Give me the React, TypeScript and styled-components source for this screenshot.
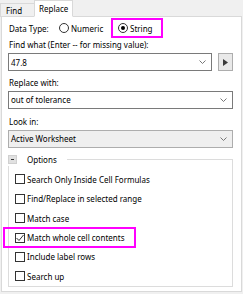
import styled, { createGlobalStyle } from 'styled-components';

const GlobalStyle = createGlobalStyle`
  html, body {
    margin: 0;
    padding: 0;
    background: #f0f0f0;
  }
  body {
    width: 243px;
    height: 294px;
    overflow: hidden;
    font-family: "Noto Sans", "Open Sans", sans-serif;
    font-size: 8px;
    color: #000;
  }
`;

const Window = styled.div`
  width: 243px;
  height: 294px;
  box-sizing: border-box;
  padding: 0 1px 2px 1px;
  display: flex;
  flex-direction: column;
`;

const TabBar = styled.div`
  display: flex;
  align-items: flex-end;
  height: 17px;
  margin-left: -1px;
  margin-bottom: -1px;
  position: relative;
  z-index: 1;
`;

const Tab = styled.div<{ $active?: boolean }>`
  box-sizing: border-box;
  height: ${(p) => (p.$active ? '17px' : '14px')};
  padding: ${(p) => (p.$active ? '0 4px 1px' : '1px 5px 0')};
  width: ${(p) => (p.$active ? '39px' : '35px')};
  display: flex;
  align-items: center;
  background: ${(p) => (p.$active ? '#fff' : '#f0f0f0')};
  border: 1px solid #d9d9d9;
  border-bottom: 1px solid ${(p) => (p.$active ? '#fff' : '#d9d9d9')};
  margin-right: ${(p) => (p.$active ? '0' : '-1px')};
`;

const Panel = styled.div`
  flex: 1;
  background: #fff;
  border: 1px solid #d9d9d9;
  padding: 1px 8px 0 6px;
  display: flex;
  flex-direction: column;
`;

const TypeRow = styled.div`
  display: grid;
  grid-template-columns: 51px 52px 52px;
  align-items: center;
  height: 20px;
`;

const TypeLabel = styled.span`
  padding-left: 1px;
`;

const Highlight = styled.div`
  box-sizing: border-box;
  border: 2px solid #ff00ff;
`;

const RadioOption = styled.label`
  display: flex;
  align-items: center;
  gap: 2px;
  white-space: nowrap;
`;

const StringBox = styled(Highlight)`
  display: flex;
  align-items: center;
  height: 20px;
  padding-left: 5px;
`;

const Radio = styled.span<{ $checked?: boolean }>`
  box-sizing: border-box;
  width: 10px;
  height: 10px;
  border-radius: 50%;
  border: 1px solid #333;
  display: flex;
  align-items: center;
  justify-content: center;
  &::after {
    content: '';
    display: ${(p) => (p.$checked ? 'block' : 'none')};
    width: 4px;
    height: 4px;
    border-radius: 50%;
    background: #000;
  }
`;

const FieldLabel = styled.div`
  line-height: 13px;
  margin: 0 0 2px 1px;
`;

const ComboRow = styled.div`
  display: flex;
  gap: 6px;
  margin-bottom: 5px;
`;

const Combo = styled.div<{ $readOnly?: boolean; $gap?: number }>`
  flex: 1;
  box-sizing: border-box;
  height: 18px;
  display: flex;
  align-items: center;
  justify-content: space-between;
  padding: 0 5px 0 2px;
  background: ${(p) => (p.$readOnly ? '#efefef' : '#fff')};
  border: 1px solid ${(p) => (p.$readOnly ? '#adadad' : '#7a7a7a')};
  margin-bottom: ${(p) => p.$gap ?? 0}px;
`;

const ArrowButton = styled.div`
  box-sizing: border-box;
  width: 15px;
  height: 18px;
  border: 1px solid #adadad;
  background: #e9e9e9;
  display: flex;
  align-items: center;
  justify-content: center;
`;

const Chevron = () => (
  <svg width="7" height="4" viewBox="0 0 7 4">
    <path d="M0.5 0.5 L3.5 3.5 L6.5 0.5" fill="none" stroke="#777" strokeWidth="1" />
  </svg>
);

const Group = styled.fieldset`
  margin: 0 0 4px 0;
  padding: 4px 0 0 0;
  border: 1px solid #dcdcdc;
  flex: 1;
  display: flex;
  flex-direction: column;
  min-width: 0;
`;

const Legend = styled.legend`
  display: flex;
  align-items: center;
  line-height: 13px;
  padding: 0 10px 0 0;
  margin-left: -1px;
`;

const ToggleButton = styled.span`
  box-sizing: border-box;
  width: 9px;
  height: 9px;
  background: #e1e1e1;
  border: 1px solid #d0d0d0;
  display: flex;
  align-items: center;
  justify-content: center;
  margin-right: 10px;
  &::after {
    content: '';
    width: 3px;
    height: 1px;
    background: #333;
  }
`;

const CheckRow = styled.div`
  position: relative;
  display: flex;
  align-items: center;
  height: 19.4px;
  margin-left: 6px;
  gap: 2px;
  white-space: nowrap;
`;

const Box = styled.span`
  box-sizing: border-box;
  width: 10px;
  height: 10px;
  border: 1px solid #333;
  display: flex;
  align-items: center;
  justify-content: center;
`;

const RowHighlight = styled(Highlight)`
  position: absolute;
  left: -12px;
  top: -1px;
  width: 133px;
  height: 21px;
`;

const options = [
  { label: 'Search Only Inside Cell Formulas' },
  { label: 'Find/Replace in selected range' },
  { label: 'Match case' },
  { label: 'Match whole cell contents', checked: true, marked: true },
  { label: 'Include label rows' },
  { label: 'Search up' },
];

export default function App() {
  return (
    <Window>
      <GlobalStyle />
      <TabBar>
        <Tab>Find</Tab>
        <Tab $active>Replace</Tab>
      </TabBar>
      <Panel>
        <TypeRow>
          <TypeLabel>Data Type:</TypeLabel>
          <RadioOption>
            <Radio />
            Numeric
          </RadioOption>
          <StringBox>
            <RadioOption>
              <Radio $checked />
              String
            </RadioOption>
          </StringBox>
        </TypeRow>
        <FieldLabel>Find what (Enter -- for missing value):</FieldLabel>
        <ComboRow>
          <Combo>
            47.8
            <Chevron />
          </Combo>
          <ArrowButton>
            <svg width="5" height="7" viewBox="0 0 5 7">
              <path d="M0 0 L5 3.5 L0 7 Z" fill="#3b3b3b" />
            </svg>
          </ArrowButton>
        </ComboRow>
        <FieldLabel>Replace with:</FieldLabel>
        <Combo $gap={6}>
          out of tolerance
          <Chevron />
        </Combo>
        <FieldLabel>Look in:</FieldLabel>
        <Combo $readOnly $gap={5}>
          Active Worksheet
          <Chevron />
        </Combo>
        <Group>
          <Legend>
            <ToggleButton />
            Options
          </Legend>
          {options.map((o) => (
            <CheckRow key={o.label}>
              {o.marked && <RowHighlight />}
              <Box>
                {o.checked && (
                  <svg width="8" height="8" viewBox="0 0 8 8">
                    <path d="M0.5 4 L3 6.5 L7.5 1" fill="none" stroke="#333" strokeWidth="1" />
                  </svg>
                )}
              </Box>
              {o.label}
            </CheckRow>
          ))}
        </Group>
      </Panel>
    </Window>
  );
}
